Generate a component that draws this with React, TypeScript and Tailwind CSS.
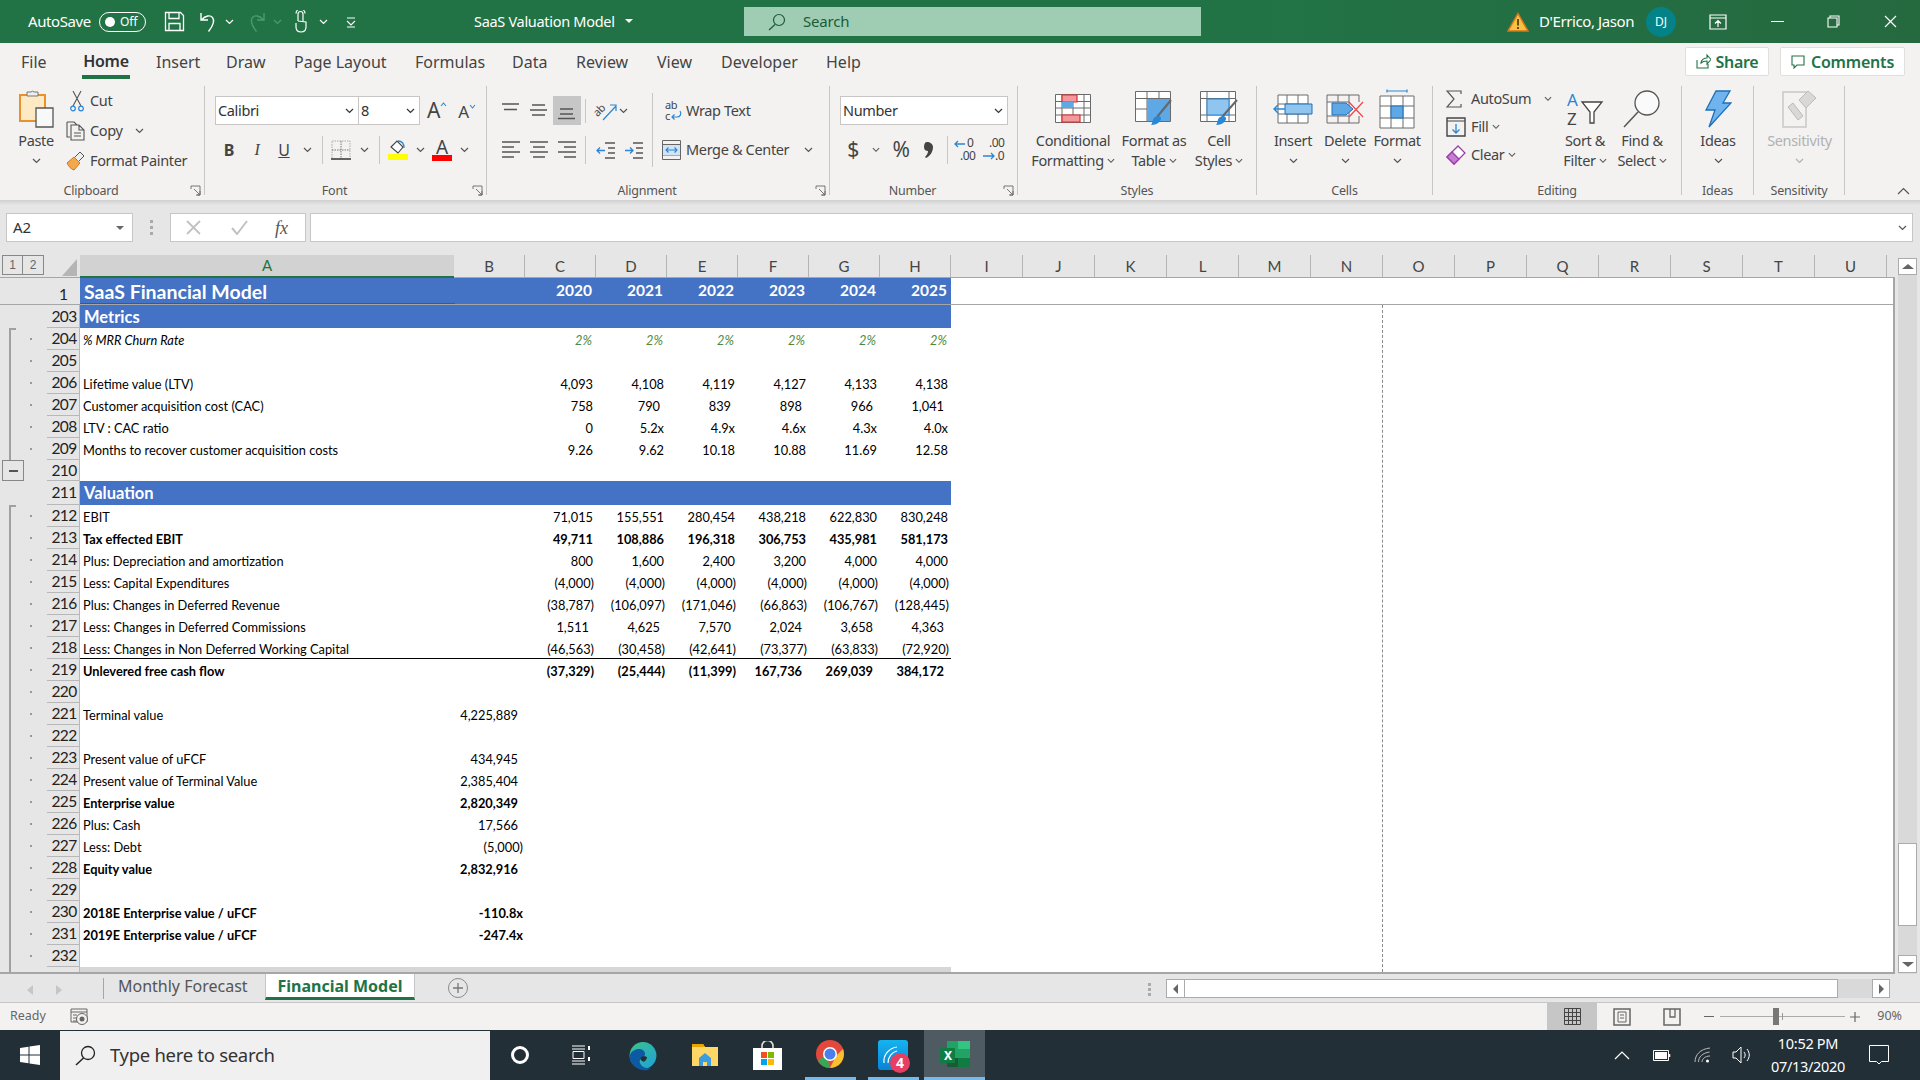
import React from 'react';

const UI = "font-['Noto_Sans',sans-serif]";
const CELL = "font-['Lato',sans-serif]";

type S = { w: number; h: number; v?: string; children?: React.ReactNode; c?: string };
const Svg = ({ w, h, v, children, c }: S) => (
  <svg width={w} height={h} viewBox={v ?? `0 0 ${w} ${h}`} fill="none" className={c ?? 'block shrink-0'}>{children}</svg>
);

const Chev = ({ color = '#555', w = 9 }: { color?: string; w?: number }) => (
  <Svg w={w} h={6} v="0 0 9 6"><path d="M1 1l3.5 3.5L8 1" stroke={color} strokeWidth="1.2" /></Svg>
);

const G = '#555';
const B = '#2b86d4';

/* ---------- title bar ---------- */
const TitleBar = () => (
  <div className="h-[43px] shrink-0 flex items-center bg-linear-to-r from-[#217346] from-65% to-[#25693f] text-white">
    <div className="ml-[28px] w-[71px] text-[15px] tracking-[-0.4px]">AutoSave</div>
    <div className="w-[47px] h-[20px] border border-white rounded-full flex items-center pl-[5px] gap-[5px]">
      <div className="w-[10px] h-[10px] rounded-full bg-white" />
      <span className="text-[12px] leading-none">Off</span>
    </div>
    <div className="ml-[18px]">
      <Svg w={21} h={21}><path d="M1.5 1.5h15l3 3v15h-18zM5 1.5v6h10v-6M5 19.5v-7h11v7" stroke="#fff" strokeWidth="1.3" /></Svg>
    </div>
    <div className="ml-[14px]">
      <Svg w={19} h={24}><path d="M2 3v7h7M2.5 10c4-5 9-5 11-2.500s1.500 7-4 14" stroke="#fff" strokeWidth="1.4" /></Svg>
    </div>
    <div className="ml-[7px]"><Chev color="#fff" /></div>
    <div className="ml-[13px]">
      <Svg w={20} h={24}><path d="M17 3v7h-7M16.500 10c-4-5-9-5-11-2.500s-1.500 7 4 14" stroke="#4d9a6e" strokeWidth="1.4" /></Svg>
    </div>
    <div className="ml-[6px]"><Chev color="#4d9a6e" /></div>
    <div className="ml-[11px]">
      <Svg w={15} h={24}><path d="M5 11V4a2.500 2.500 0 015 0v7M3 3.500a4.500 4.500 0 019 0M3 13v4c0 3 2 5 5 5s5-2 5-5v-5l-8-1" stroke="#fff" strokeWidth="1.2" /></Svg>
    </div>
    <div className="ml-[11px]"><Chev color="#fff" /></div>
    <div className="ml-[18px]">
      <Svg w={10} h={12}><path d="M1 2h8M1 5l4 4 4-4M1 11h8" stroke="#fff" strokeWidth="1.1" /></Svg>
    </div>
    <div className="ml-[118px] w-[270px] flex items-center text-[14.500px] tracking-[-0.3px]">
      <span>SaaS Valuation Model</span>
      <span className="ml-[10px] mb-[1px] w-0 h-0 border-x-[4px] border-x-transparent border-t-[4px] border-t-white" />
    </div>
    <div className="w-[457px] h-[29px] bg-[#9fcdb3] flex items-center text-[#1a5c38]">
      <div className="ml-[24px]">
        <Svg w={18} h={18}><circle cx="11" cy="7" r="5.500" stroke="#1a5c38" strokeWidth="1.200" /><path d="M7 11.500L1 17" stroke="#1a5c38" strokeWidth="1.200" /></Svg>
      </div>
      <span className="ml-[17px] text-[15px] tracking-[-0.2px]">Search</span>
    </div>
    <div className="ml-[306px]">
      <Svg w={22} h={20}><path d="M11 1.500L21 19H1z" fill="#f5c242" stroke="#d9731c" strokeWidth="1.500" /><path d="M11 7v6.500M11 15v2" stroke="#4a3000" strokeWidth="1.600" /></Svg>
    </div>
    <div className="ml-[10px] w-[108px] text-[15px] tracking-[-0.4px] whitespace-nowrap">D'Errico, Jason</div>
    <div className="w-[30px] h-[30px] -ml-[1px] rounded-full bg-[#038387] flex items-center justify-center text-[12px]">DJ</div>
    <div className="ml-[33px]">
      <Svg w={18} h={16}><path d="M1 1h16v14H1zM1 4h16M9 13V7M6 9.500l3-3 3 3" stroke="#fff" strokeWidth="1.200" /></Svg>
    </div>
    <div className="ml-[44px]"><div className="w-[13px] h-[1.500px] bg-white" /></div>
    <div className="ml-[43px]">
      <Svg w={13} h={13}><path d="M3 3V1h9v9h-2M1 3h9v9H1z" stroke="#fff" strokeWidth="1.100" /></Svg>
    </div>
    <div className="ml-[44px]">
      <Svg w={13} h={13}><path d="M1 1l11 11M12 1L1 12" stroke="#fff" strokeWidth="1.200" /></Svg>
    </div>
  </div>
);

/* ---------- ribbon tabs ---------- */
const TabsRow = () => (
  <div className={`h-[37px] shrink-0 flex items-center bg-[#f3f2f1] text-[#444] text-[16px] ${UI}`}>
    <div className="ml-[21px] w-[61px]">File</div>
    <div className="w-[74px] h-full flex items-start">
      <div className="w-[48px] h-[36px] border-b-[4px] border-[#217346] flex items-center justify-center font-semibold text-[#333] tracking-[-0.3px] pt-[4px]">Home</div>
    </div>
    <div className="w-[70px]">Insert</div>
    <div className="w-[68px]">Draw</div>
    <div className="w-[121px]">Page Layout</div>
    <div className="w-[97px]">Formulas</div>
    <div className="w-[64px]">Data</div>
    <div className="w-[81px]">Review</div>
    <div className="w-[64px]">View</div>
    <div className="w-[105px]">Developer</div>
    <div className="w-[60px]">Help</div>
    <div className="ml-auto w-[84px] h-[29px] bg-white border border-[#e1dfdd] rounded-[2px] flex items-center justify-center gap-[5px] font-semibold text-[#217346] tracking-[-0.3px]">
      <Svg w={15} h={15}><path d="M1 6v8h11v-4M5 9c0-3 3-5 6-5V1l4 4.500L11 10V7C8 7 6 8 5 9z" stroke="#217346" strokeWidth="1.100" /></Svg>
      Share
    </div>
    <div className="ml-[11px] mr-[15px] w-[125px] h-[29px] bg-white border border-[#e1dfdd] rounded-[2px] flex items-center justify-center gap-[6px] font-semibold text-[#217346] tracking-[-0.2px]">
      <Svg w={14} h={14}><path d="M1 1h12v9H6l-3 3v-3H1z" stroke="#217346" strokeWidth="1.100" /></Svg>
      Comments
    </div>
  </div>
);

/* ---------- ribbon parts ---------- */
const Launcher = () => (
  <div className="absolute right-[3px] top-[2px]">
    <Svg w={11} h={11}><path d="M1 4V1h9v9H7M4 4l6 6M10 6v4H6" stroke="#666" strokeWidth="0.900" /></Svg>
  </div>
);

const Group = ({ className, label, launcher, children }: { className: string; label: string; launcher?: boolean; children: React.ReactNode }) => (
  <div className={`${className} h-[109px] shrink-0 border-r border-[#c8c6c4] flex flex-col`}>
    <div className="h-[96px] shrink-0 flex">{children}</div>
    <div className={`relative h-[16px] mt-[1px] shrink-0 flex items-center justify-center text-[12.500px] leading-none text-[#555] tracking-[-0.2px] ${launcher ? 'pr-[22px]' : ''}`}>
      {label}
      {launcher && <Launcher />}
    </div>
  </div>
);

const Big = ({ className, icon, l1, l2, muted }: { className: string; icon: React.ReactNode; l1: string; l2?: string; muted?: boolean }) => (
  <div className={`${className} flex flex-col items-center shrink-0 ${muted ? 'text-[#b1b1b1]' : 'text-[#444]'}`}>
    <div className="h-[45px] flex items-center justify-center">{icon}</div>
    <div className="h-[20px] flex items-center whitespace-nowrap">{l1}</div>
    {l2 ? (
      <div className="h-[20px] flex items-center gap-[3px] whitespace-nowrap">{l2}<Chev w={8} /></div>
    ) : (
      <div className="h-[20px] flex items-center"><Chev color={muted ? '#b1b1b1' : '#555'} /></div>
    )}
  </div>
);

const Lines = ({ kind }: { kind: 'top' | 'mid' | 'bot' | 'left' | 'center' | 'right' }) => {
  const d: Record<string, string> = {
    top: 'M1 3h17M3 8.500h13', mid: 'M3 4h13M1 9h17M3 14h13', bot: 'M3 8h13M3 13h13M1 17.500h17',
    left: 'M1 2h18M1 7h12M1 12h18M1 17h12', center: 'M1 2h18M4 7h12M1 12h18M4 17h12', right: 'M1 2h18M7 7h12M1 12h18M7 17h12',
  };
  return <Svg w={20} h={19}><path d={d[kind]} stroke={G} strokeWidth="1.300" /></Svg>;
};

const Sep = ({ className }: { className: string }) => <div className={`${className} w-px bg-[#c8c6c4] shrink-0`} />;

const Combo = ({ className, text }: { className: string; text: string }) => (
  <div className={`${className} h-[29px] bg-white border border-[#c8c6c4] flex items-center justify-between pl-[2px] pr-[4px] text-[#333] text-[14.500px] shrink-0`}>
    <span>{text}</span><Chev color="#333" />
  </div>
);

const OV = 'block shrink-0 overflow-visible';

const Ribbon = () => (
  <div className={`h-[120px] shrink-0 bg-[#f3f2f1] flex pt-[6px] text-[14.500px] tracking-[-0.35px] text-[#444] ${UI}`}>
    {/* Clipboard */}
    <Group className="w-[205px]" label="Clipboard" launcher>
      <div className="ml-[14px] w-[44px] flex flex-col items-center">
        <div className="h-[45px] flex items-center justify-center">
          <Svg w={35} h={40}>
            <path d="M1 6h25v26H1z" fill="#fdeac4" stroke="#e8912d" strokeWidth="2" />
            <path d="M8 7V3h4a2 2 0 013 0h4v4z" fill="#eee" stroke="#777" />
            <path d="M17 19h17v19H17z" fill="#f8f8f8" stroke="#555" strokeWidth="1.300" />
          </Svg>
        </div>
        <div className="h-[20px] flex items-center">Paste</div>
        <div className="h-[20px] flex items-center"><Chev /></div>
      </div>
      <div className="ml-[8px] flex flex-col">
        <div className="h-[30px] flex items-center">
          <div className="w-[16px] ml-[4px] mr-[4px]">
            <Svg w={14} h={22}>
              <path d="M3 16L11 1M11 16L3 1" stroke="#555" strokeWidth="1.100" />
              <circle cx="3" cy="18.500" r="2.300" stroke={B} strokeWidth="1.200" /><circle cx="11" cy="18.500" r="2.300" stroke={B} strokeWidth="1.200" />
            </Svg>
          </div>
          Cut
        </div>
        <div className="h-[30px] flex items-center">
          <div className="w-[20px] mr-[4px]">
            <Svg w={20} h={20}><path d="M1 1h7l3 3M1 1v15h3M5 4h8l5 5v10H5zM13 4v5h5M8 12h7M8 15h7" stroke="#555" strokeWidth="1.100" /></Svg>
          </div>
          Copy
          <div className="ml-[12px]"><Chev /></div>
        </div>
        <div className="h-[30px] flex items-center">
          <div className="w-[20px] mr-[4px]">
            <Svg w={20} h={20}><path d="M1 12l7-6 6 6-6 7C5 18 3 16 1 12z" fill="#f2a84b" stroke="#d9731c" /><path d="M9 6l5-5 4 4-5 5" fill="#eee" stroke="#555" /></Svg>
          </div>
          Format Painter
        </div>
      </div>
    </Group>
    {/* Font */}
    <Group className="w-[282px]" label="Font" launcher>
      <div className="ml-[10px] pt-[10px] flex flex-col">
        <div className="flex items-center h-[29px]">
          <Combo className="w-[144px]" text="Calibri" />
          <Combo className="w-[62px] -ml-px" text="8" />
          <div className="w-[26px] ml-[4px] flex items-start justify-center text-[#444] text-[21px] leading-none">A<Svg w={7} h={5} c="mt-[2px]"><path d="M1 4l2.500-3L6 4" stroke={B} strokeWidth="1.100" /></Svg></div>
          <div className="w-[26px] ml-[4px] flex items-start justify-center text-[#444] text-[17px] leading-none mt-[2px]">A<Svg w={7} h={5} c="mt-[1px]"><path d="M1 1l2.500 3L6 1" stroke={B} strokeWidth="1.100" /></Svg></div>
        </div>
        <div className="flex items-center h-[29px] mt-[10px]">
          <div className="w-[28px] text-center font-bold text-[16px] text-[#444]">B</div>
          <div className="w-[28px] text-center italic text-[16px] text-[#444] font-['Liberation_Serif',serif]">I</div>
          <div className="w-[26px] text-center underline text-[16px] text-[#444]">U</div>
          <div className="w-[20px] flex justify-center"><Chev /></div>
          <Sep className="ml-[5px] h-[28px]" />
          <div className="ml-[8px] w-[20px]">
            <Svg w={20} h={20}><path d="M1 1h18v18H1z" stroke="#aaa" strokeWidth="1" strokeDasharray="1.500 1" /><path d="M10 1v18M1 10h18" stroke="#777" strokeDasharray="1.500 1" /><path d="M0 19h20" stroke="#444" strokeWidth="1.600" /></Svg>
          </div>
          <div className="w-[26px] flex justify-center"><Chev /></div>
          <Sep className="ml-[2px] h-[28px]" />
          <div className="ml-[8px] w-[20px] flex flex-col items-center">
            <Svg w={20} h={16}><path d="M3 8l6-6 6 6-5 6z" fill="#fff" stroke="#444" strokeWidth="1.100" /><path d="M10 2c3 0 6 2 6 7" stroke={B} strokeWidth="1.300" /></Svg>
            <div className="w-[20px] h-[6px] bg-[#ffff00] -mt-px" />
          </div>
          <div className="w-[24px] flex justify-center"><Chev /></div>
          <div className="w-[20px] flex flex-col items-center">
            <div className="h-[16px] text-[19px] leading-[16px] text-[#444]">A</div>
            <div className="w-[20px] h-[6px] bg-[#ff0000]" />
          </div>
          <div className="w-[24px] flex justify-center"><Chev /></div>
        </div>
      </div>
    </Group>
    {/* Alignment */}
    <Group className="w-[343px]" label="Alignment" launcher>
      <div className="ml-[10px] pt-[10px] flex flex-col">
        <div className="flex items-center h-[29px]">
          <div className="w-[28px] flex justify-center"><Lines kind="top" /></div>
          <div className="w-[28px] flex justify-center"><Lines kind="mid" /></div>
          <div className="w-[28px] h-[29px] bg-[#c6c6c6] flex items-center justify-center"><Lines kind="bot" /></div>
          <Sep className="ml-[4px] h-[24px]" />
          <div className="ml-[8px] w-[24px]">
            <Svg w={24} h={24} c={OV}>
              <text x="0" y="14" fontSize="11" fill="#444" transform="rotate(-45 7 12)">ab</text>
              <path d="M9 21L22 7M16 6h6v6" stroke={B} strokeWidth="1.200" />
            </Svg>
          </div>
          <div className="w-[10px] flex justify-center"><Chev /></div>
        </div>
        <div className="flex items-center h-[29px] mt-[10px]">
          <div className="w-[28px] flex justify-center"><Lines kind="left" /></div>
          <div className="w-[28px] flex justify-center"><Lines kind="center" /></div>
          <div className="w-[28px] flex justify-center"><Lines kind="right" /></div>
          <Sep className="ml-[4px] h-[28px]" />
          <div className="ml-[6px] w-[28px] flex justify-center">
            <Svg w={20} h={18}><path d="M9 2h10M12 7h7M12 12h7M9 17h10" stroke={G} strokeWidth="1.300" /><path d="M9 9.500H1M4 6.500l-3 3 3 3" stroke={B} strokeWidth="1.300" /></Svg>
          </div>
          <div className="w-[27px] flex justify-center">
            <Svg w={20} h={18}><path d="M9 2h10M12 7h7M12 12h7M9 17h10" stroke={G} strokeWidth="1.300" /><path d="M1 9.500h8M6 6.500l3 3-3 3" stroke={B} strokeWidth="1.300" /></Svg>
          </div>
        </div>
      </div>
      <Sep className="ml-[5px] mt-[7px] h-[74px]" />
      <div className="ml-[9px] pt-[10px] flex flex-col">
        <div className="h-[29px] flex items-center">
          <div className="ml-[3px] mr-[4px] w-[17px]">
            <Svg w={17} h={22} c={OV}>
              <text x="0" y="9" fontSize="11" fill="#444">ab</text>
              <text x="0" y="20" fontSize="11" fill="#444">c</text>
              <path d="M15 11c2 3 0 6-3 6H7M9.500 14.500L7 17l2.500 2.500" stroke={B} strokeWidth="1.200" />
            </Svg>
          </div>
          Wrap Text
        </div>
        <div className="h-[29px] mt-[10px] flex items-center">
          <div className="mr-[5px] w-[19px]">
            <Svg w={19} h={20}><path d="M.5.500h18v19H.500z" stroke="#666" /><path d="M.5 4.500h18M.5 15h18" stroke="#666" /><path d="M1 5h17v10H1z" fill="#cfe4f7" /><path d="M4 10h11M6.500 7.500L4 10l2.500 2.500M12.500 7.500L15 10l-2.500 2.500" stroke={B} strokeWidth="1.100" /></Svg>
          </div>
          Merge &amp; Center
          <div className="ml-[15px]"><Chev /></div>
        </div>
      </div>
    </Group>
    {/* Number */}
    <Group className="w-[188px]" label="Number" launcher>
      <div className="ml-[10px] pt-[10px] flex flex-col">
        <Combo className="w-[168px]" text="Number" />
        <div className="flex items-center h-[29px] mt-[10px]">
          <div className="w-[26px] text-center text-[21px] leading-none">$</div>
          <div className="ml-[5px] w-[10px] flex justify-center"><Chev w={8} /></div>
          <div className="ml-[7px] w-[26px] text-center text-[21px] leading-none">%</div>
          <div className="ml-[2px] w-[26px] flex justify-center">
            <Svg w={10} h={16}><path d="M3 0c3 0 6 2 6 5 0 5-3 9-7 11l-1-1c2-2 3-4 3-6-2 0-4-1-4-4 0-3 1-5 3-5z" fill="#444" /></Svg>
          </div>
          <Sep className="ml-[5px] h-[28px]" />
          <div className="ml-[4px] w-[28px] flex justify-center">
            <Svg w={24} h={26} c={OV}>
              <text x="13" y="10" fontSize="12" fill="#444" letterSpacing="-0.500">0</text>
              <text x="6" y="23" fontSize="12" fill="#444" letterSpacing="-0.500">.00</text>
              <path d="M11 7H1M4 4L1 7l3 3" stroke={B} strokeWidth="1.300" />
            </Svg>
          </div>
          <div className="w-[28px] flex justify-center">
            <Svg w={24} h={26} c={OV}>
              <text x="7" y="10" fontSize="12" fill="#444" letterSpacing="-0.500">.00</text>
              <text x="13" y="23" fontSize="12" fill="#444" letterSpacing="-0.500">.0</text>
              <path d="M1 19h11M9 16l3 3-3 3" stroke={B} strokeWidth="1.300" />
            </Svg>
          </div>
        </div>
      </div>
    </Group>
    {/* Styles */}
    <Group className="w-[239px]" label="Styles">
      <Big className="ml-[6px] w-[98px]" l1="Conditional" l2="Formatting" icon={
        <Svg w={36} h={29}>
          <path d="M.5.500h35v28H.500zM.5 7.500h35M.5 14h35M.5 21h35M7 .500v28M18 .500v28M29 .500v28" stroke="#6a6a6a" fill="#fff" />
          <path d="M7 1h15v7H7z" fill="#f5989d" stroke="#d9312b" strokeWidth="1.200" />
          <path d="M7 8h11v6H7z" fill="#5ea8e6" />
          <path d="M7 21h18v7H7z" fill="#f5989d" stroke="#d9312b" strokeWidth="1.200" />
        </Svg>
      } />
      <Big className="w-[64px]" l1="Format as" l2="Table" icon={
        <Svg w={38} h={36}>
          <path d="M.5.500h35v30H.500zM.5 7.500h35M.5 18h35M12 .500v30M24 .500v30" stroke="#6a6a6a" fill="#fff" />
          <path d="M12 8h23v22H12z" fill="#5ea8e6" />
          <path d="M36 9L22 26" stroke="#666" strokeWidth="2" />
          <path d="M23 25c3 0 4 3 2 5-2 3-6 4-9 4 2-2 1-6 4-8z" fill="#2b86d4" />
        </Svg>
      } />
      <Big className="w-[66px]" l1="Cell" l2="Styles" icon={
        <Svg w={38} h={36}>
          <path d="M.5.500h35v30H.500zM.5 7.500h35M.5 24h35M7 .500v30M29 .500v30" stroke="#6a6a6a" fill="#fff" />
          <path d="M7 8h22v16H7z" fill="#90c5f0" stroke="#2b86d4" />
          <path d="M37 9L22 26" stroke="#666" strokeWidth="2" />
          <path d="M23 25c3 0 4 3 2 5-2 3-6 4-9 4 2-2 1-6 4-8z" fill="#2b86d4" />
        </Svg>
      } />
    </Group>
    {/* Cells */}
    <Group className="w-[176px]" label="Cells">
      <Big className="ml-[10px] w-[52px]" l1="Insert" icon={
        <Svg w={40} h={30}>
          <path d="M5 1h30v28H5zM14 1v28M25 1v28M5 10h30M5 20h30" stroke="#6a6a6a" fill="#fff" />
          <path d="M12 10h27v10H12z" fill="#90c5f0" stroke="#1e70b8" />
          <path d="M12 15H1M5 11l-4 4 4 4" stroke="#2b86d4" strokeWidth="1.500" />
        </Svg>
      } />
      <Big className="w-[52px]" l1="Delete" icon={
        <Svg w={38} h={30}>
          <path d="M1 1h32v7M1 1v7M1 22v7h32v-7M12 1v7M12 22v7M23 1v7M23 22v7" stroke="#6a6a6a" />
          <path d="M1 8h22v14H1z" fill="#fff" stroke="#6a6a6a" />
          <path d="M6 9h14l7 6-7 6H6z" fill="#5ea8e6" stroke="#1e70b8" />
          <path d="M23 8l14 15M37 8L23 23" stroke="#f0484b" strokeWidth="1.300" />
        </Svg>
      } />
      <Big className="w-[52px]" l1="Format" icon={
        <Svg w={36} h={40}>
          <path d="M8 2h20M8 .500v3M28 .500v3" stroke="#2b86d4" strokeWidth="1.200" />
          <path d="M1 7h34v32H1zM1 17h34M1 29h34M12 7v32M24 7v32" stroke="#6a6a6a" fill="#fff" />
          <path d="M12 17h12v12H12z" fill="#5ea8e6" stroke="#1e70b8" />
        </Svg>
      } />
    </Group>
    {/* Editing */}
    <Group className="w-[249px]" label="Editing">
      <div className="ml-[13px] w-[110px] flex flex-col -mt-[1px]">
        <div className="h-[28px] flex items-center">
          <div className="w-[25px]"><Svg w={17} h={18}><path d="M15 4V1H1l7 8-7 8h14v-3" stroke="#555" strokeWidth="1.200" /></Svg></div>
          AutoSum
          <div className="ml-[13px]"><Chev w={8} /></div>
        </div>
        <div className="h-[28px] flex items-center">
          <div className="w-[25px]"><Svg w={20} h={20}><path d="M1 1h18v18H1z" stroke="#444" strokeWidth="1.400" /><path d="M1 4h18" stroke="#444" /><path d="M10 7v9M6.500 12.500L10 16l3.500-3.500" stroke={B} strokeWidth="1.300" /></Svg></div>
          Fill
          <div className="ml-[4px]"><Chev w={8} /></div>
        </div>
        <div className="h-[28px] flex items-center">
          <div className="w-[25px]"><Svg w={20} h={20}><path d="M1 12L12 1l7 7-11 11z" fill="#fff" stroke="#9b3fa8" strokeWidth="1.300" /><path d="M1 12l5-5 7 7-5 5z" fill="#c57fd0" stroke="#9b3fa8" strokeWidth="1.300" /></Svg></div>
          Clear
          <div className="ml-[4px]"><Chev w={8} /></div>
        </div>
      </div>
      <Big className="w-[58px]" l1="Sort &" l2="Filter" icon={
        <Svg w={38} h={36} c={OV}>
          <text x="1" y="15" fontSize="17" fill="#2b86d4">A</text>
          <text x="1" y="34" fontSize="17" fill="#444">Z</text>
          <path d="M16 11h20l-8 10v11h-4V21z" stroke="#444" strokeWidth="1.300" fill="#fff" />
        </Svg>
      } />
      <Big className="w-[56px]" l1="Find &" l2="Select" icon={
        <Svg w={38} h={38}>
          <circle cx="24" cy="13" r="12" fill="#fafafa" stroke="#555" strokeWidth="1.300" />
          <path d="M15 22L1 37" stroke="#555" strokeWidth="1.500" />
        </Svg>
      } />
    </Group>
    {/* Ideas */}
    <Group className="w-[72px]" label="Ideas">
      <Big className="w-[72px]" l1="Ideas" icon={
        <Svg w={28} h={38}><path d="M12 1h14l-7 12h8L5 37l6-17H2z" fill="#6fb4ee" stroke="#1e70b8" strokeWidth="1.300" /></Svg>
      } />
    </Group>
    {/* Sensitivity */}
    <Group className="w-[91px]" label="Sensitivity">
      <Big className="w-[91px]" muted l1="Sensitivity" icon={
        <Svg w={35} h={38}>
          <path d="M1 2h23v35H1z" stroke="#c8c8c8" strokeWidth="1.500" />
          <path d="M6 17l10 13 5-4-10-13z" fill="#d8d8d8" stroke="#bbb" />
          <path d="M17 10l9-9 8 7-10 10z" fill="#d8d8d8" stroke="#bbb" />
        </Svg>
      } />
    </Group>
    <div className="flex-1 flex items-end justify-end pr-[10px] pb-[5px]">
      <Svg w={13} h={8}><path d="M1 7l5.500-5.500L12 7" stroke="#555" strokeWidth="1.200" /></Svg>
    </div>
  </div>
);

/* ---------- formula bar ---------- */
const FormulaBar = () => (
  <div className={`h-[50px] shrink-0 bg-[#e6e6e6] flex pt-[8px] ${UI}`}>
    <div className="ml-[6px] w-[127px] h-[29px] bg-white border border-[#c6c6c6] flex items-center justify-between pl-[6px] pr-[8px] text-[15px] text-[#333]">
      A2
      <span className="w-0 h-0 border-x-[4px] border-x-transparent border-t-[4px] border-t-[#666]" />
    </div>
    <div className="w-[37px] h-[29px] flex flex-col items-center justify-center gap-[3px]">
      <div className="w-[3px] h-[3px] bg-[#aaa]" /><div className="w-[3px] h-[3px] bg-[#aaa]" /><div className="w-[3px] h-[3px] bg-[#aaa]" />
    </div>
    <div className="w-[136px] h-[29px] bg-white border border-[#c6c6c6] flex items-center text-[#666]">
      <div className="ml-[15px]"><Svg w={15} h={15}><path d="M1 1l13 13M14 1L1 14" stroke="#c2c2c2" strokeWidth="1.800" /></Svg></div>
      <div className="ml-[30px]"><Svg w={17} h={15}><path d="M1 8l5 6L16 1" stroke="#c2c2c2" strokeWidth="2" /></Svg></div>
      <div className="ml-[27px] text-[18px] leading-none italic font-['Liberation_Serif',serif] text-[#555]">fx</div>
    </div>
    <div className="ml-[4px] w-[1603px] h-[29px] bg-white border border-[#c6c6c6] flex items-center justify-end pr-[5px]">
      <Chev color="#555" />
    </div>
  </div>
);

/* ---------- sheet ---------- */
const others = ['I', 'J', 'K', 'L', 'M', 'N', 'O', 'P', 'Q', 'R', 'S', 'T', 'U'];

const ColHeaders = () => (
  <div className={`h-[23px] shrink-0 flex bg-[#e6e6e6] border-b border-[#a6a6a6] text-[15px] text-[#444] leading-none ${CELL}`}>
    <div className="w-[47px] flex items-start pl-[2px] shrink-0 font-['Liberation_Sans',sans-serif] text-[12px] text-[#666]">
      <div className="w-[21px] h-[20px] border border-[#888] flex items-center justify-center">1</div>
      <div className="w-[21px] h-[20px] border border-[#888] border-l-0 flex items-center justify-center">2</div>
    </div>
    <div className="w-[33px] flex items-end justify-end pr-[3px] pb-[1px] shrink-0">
      <Svg w={15} h={17}><path d="M15 0v17H0z" fill="#b5b5b5" /></Svg>
    </div>
    <div className="w-[374px] shrink-0 bg-[#d2d2d2] border-b-2 border-[#217346] -mb-px flex items-center justify-center text-[#217346]">A</div>
    {['B', 'C', 'D', 'E', 'F', 'G', 'H'].map((c) => (
      <div key={c} className="w-[71px] shrink-0 border-r border-[#b5b5b5] flex items-center justify-center">{c}</div>
    ))}
    {others.map((c) => (
      <div key={c} className="w-[72px] shrink-0 border-r border-[#b5b5b5] flex items-center justify-center">{c}</div>
    ))}
  </div>
);

type R = {
  n: number; h?: 'h21' | 'h22' | 'h23' | 'h24'; label?: string; v?: string[]; bold?: boolean; italic?: boolean;
  band?: boolean; gut?: 'none' | 'start' | 'line' | 'minus'; under?: boolean;
};

const Gutter = ({ kind, dot }: { kind: R['gut']; dot: boolean }) => {
  if (kind === 'minus') {
    return (
      <div className="w-[47px] h-full shrink-0 bg-[#e6e6e6] pl-[2px] flex items-center">
        <div className="w-[22px] h-[21px] border border-[#888] flex items-center justify-center"><div className="w-[9px] h-[2px] bg-[#555]" /></div>
      </div>
    );
  }
  return (
    <div className="w-[47px] h-full shrink-0 bg-[#e6e6e6] flex items-center">
      <div className="w-[9px] shrink-0" />
      {kind === 'start' && <div className="w-[7px] h-full border-l-2 border-t-2 border-[#a0a0a0] shrink-0" />}
      {kind === 'line' && <div className="w-[7px] h-full border-l-2 border-[#a0a0a0] shrink-0" />}
      {kind === 'none' && <div className="w-[7px] shrink-0" />}
      {dot && <div className="ml-[14px] w-[2px] h-[2px] bg-[#999]" />}
    </div>
  );
};

const padOf = (s: string) => {
  if (s.startsWith('~')) return 'pr-[7px]';
  if (s.startsWith('(') || s.startsWith('-')) return 'pr-[2px]';
  return 'pr-[3px]';
};

const RowNum = ({ n }: { n: number }) => (
  <div className="w-[33px] h-full shrink-0 bg-[#e6e6e6] border-b border-r border-[#b8b8b8] flex items-center justify-center pl-[2px] pt-[1px] text-[15.500px] tracking-[-0.6px] text-[#222]">{n}</div>
);

const Row = ({ r }: { r: R }) => {
  const hc = r.h === 'h21' ? 'h-[21px]' : r.h === 'h23' ? 'h-[23px]' : r.h === 'h24' ? 'h-[24px]' : 'h-[22px]';
  const vals = r.v ?? [];
  return (
    <div className={`${hc} shrink-0 flex bg-white text-[12.800px] leading-none text-black`}>
      <Gutter kind={r.gut ?? 'line'} dot={!r.band && r.gut !== 'minus' && r.gut !== 'none'} />
      <RowNum n={r.n} />
      <div className={`flex h-full ${r.band ? 'bg-[#4472c4] text-white font-bold' : ''} ${r.under ? 'border-b border-black' : ''} ${r.bold ? 'font-bold' : ''} ${r.italic ? 'italic' : ''}`}>
        <div className={`w-[374px] shrink-0 flex items-center whitespace-nowrap ${r.band ? 'pl-[4px] pt-[1px] text-[16.500px]' : 'pl-[3px] pt-[3px]'}`}>{r.label}</div>
        {Array.from({ length: 7 }).map((_, i) => {
          const s = vals[i] ?? '';
          return (
            <div key={i} className={`w-[71px] shrink-0 flex items-center justify-end whitespace-nowrap pt-[3px] ${padOf(s)}`}>
              {s.replace('~', '')}
            </div>
          );
        })}
      </div>
    </div>
  );
};

const rows: R[] = [
  { n: 205 },
  { n: 206, label: 'Lifetime value (LTV)', v: ['', '4,093', '4,108', '4,119', '4,127', '4,133', '4,138'] },
  { n: 207, label: 'Customer acquisition cost (CAC)', v: ['', '758', '~790', '~839', '~898', '~966', '~1,041'] },
  { n: 208, label: 'LTV : CAC ratio', v: ['', '0', '5.2x', '4.9x', '4.6x', '4.3x', '4.0x'] },
  { n: 209, label: 'Months to recover customer acquisition costs', v: ['', '9.26', '9.62', '10.18', '10.88', '11.69', '12.58'] },
  { n: 210, h: 'h21', gut: 'minus' },
  { n: 211, h: 'h24', label: 'Valuation', band: true, gut: 'none' },
  { n: 212, label: 'EBIT', gut: 'start', v: ['', '71,015', '155,551', '280,454', '438,218', '622,830', '830,248'] },
  { n: 213, label: 'Tax effected EBIT', bold: true, v: ['', '49,711', '108,886', '196,318', '306,753', '435,981', '581,173'] },
  { n: 214, label: 'Plus: Depreciation and amortization', v: ['', '800', '1,600', '2,400', '3,200', '4,000', '4,000'] },
  { n: 215, label: 'Less: Capital Expenditures', v: ['', '(4,000)', '(4,000)', '(4,000)', '(4,000)', '(4,000)', '(4,000)'] },
  { n: 216, label: 'Plus: Changes in Deferred Revenue', v: ['', '(38,787)', '(106,097)', '(171,046)', '(66,863)', '(106,767)', '(128,445)'] },
  { n: 217, label: 'Less: Changes in Deferred Commissions', v: ['', '~1,511', '~4,625', '~7,570', '~2,024', '~3,658', '~4,363'] },
  { n: 218, label: 'Less: Changes in Non Deferred Working Capital', under: true, v: ['', '(46,563)', '(30,458)', '(42,641)', '(73,377)', '(63,833)', '(72,920)'] },
  { n: 219, label: 'Unlevered free cash flow', bold: true, v: ['', '(37,329)', '(25,444)', '(11,399)', '~167,736', '~269,039', '~384,172'] },
  { n: 220 },
  { n: 221, label: 'Terminal value', v: ['~4,225,889'] },
  { n: 222 },
  { n: 223, label: 'Present value of uFCF', v: ['~434,945'] },
  { n: 224, label: 'Present value of Terminal Value', v: ['~2,385,404'] },
  { n: 225, label: 'Enterprise value', bold: true, v: ['~2,820,349'] },
  { n: 226, label: 'Plus: Cash', v: ['~17,566'] },
  { n: 227, label: 'Less: Debt', v: ['(5,000)'] },
  { n: 228, label: 'Equity value', bold: true, v: ['~2,832,916'] },
  { n: 229 },
  { n: 230, label: '2018E Enterprise value / uFCF', bold: true, v: ['-110.8x'] },
  { n: 231, label: '2019E Enterprise value / uFCF', bold: true, v: ['-247.4x'] },
  { n: 232 },
];

const Sheet = () => (
  <div className={`h-[719px] shrink-0 flex bg-[#e6e6e6] ${CELL}`}>
    <div className="w-[1895px] shrink-0 flex flex-col">
      <ColHeaders />
      <div className="relative flex-1 flex flex-col bg-white border-r-2 border-[#a6a6a6] border-b-2 border-b-[#a6a6a6] overflow-hidden">
        {/* page-break line floats over the cells */}
        <div className="absolute left-[1382px] top-[27px] bottom-0 border-l border-dashed border-[#8a8a8a]" />
        {/* frozen row 1 */}
        <div className="h-[27px] shrink-0 flex bg-white border-b border-[#a6a6a6] leading-none text-white">
          <Gutter kind="none" dot={false} />
          <div className="w-[33px] h-full shrink-0 bg-[#e6e6e6] flex items-end justify-center pb-[2px] text-[15.500px] text-[#222]">1</div>
          <div className="flex h-full bg-[#4472c4] font-bold">
            <div className="w-[375px] shrink-0 flex items-end pl-[4px] pb-[2px] text-[19.500px] border-b border-[#217346]">SaaS Financial Model</div>
            <div className="w-[70px] shrink-0" />
            {['2020', '2021', '2022', '2023', '2024', '2025'].map((y) => (
              <div key={y} className="w-[71px] shrink-0 flex items-start justify-end pt-[5px] pr-[4px] text-[15.500px]">{y}</div>
            ))}
          </div>
        </div>
        <Row r={{ n: 203, h: 'h23', label: 'Metrics', band: true, gut: 'none' }} />
        <div className="h-[22px] shrink-0 flex bg-white text-[12.800px] leading-none text-black">
          <Gutter kind="start" dot />
          <RowNum n={204} />
          <div className="w-[374px] shrink-0 flex items-center pl-[3px] pt-[3px] italic">% MRR Churn Rate</div>
          <div className="w-[71px] shrink-0" />
          {[0, 1, 2, 3, 4, 5].map((i) => (
            <div key={i} className="w-[71px] shrink-0 flex items-center justify-end pt-[3px] pr-[4px] italic text-[#4e8a3c]">2%</div>
          ))}
        </div>
        {rows.map((r) => (
          <Row key={r.n} r={r} />
        ))}
        {/* partly hidden last row */}
        <div className="flex-1 flex overflow-hidden leading-none">
          <Gutter kind="line" dot={false} />
          <div className="w-[33px] h-full shrink-0 bg-[#e6e6e6] border-r border-[#b8b8b8] flex justify-center pl-[2px] pt-[3px] text-[15.500px] tracking-[-0.6px] text-[#222]">233</div>
          <div className="w-[871px] h-full bg-[#d6d6d6]" />
        </div>
      </div>
    </div>
    <div className="ml-[3px] mt-[3px] w-[19px] h-[716px] mb-[1px] bg-[#d9d9d9] flex flex-col">
      <div className="h-[17px] bg-white border border-[#ababab] flex items-center justify-center">
        <span className="w-0 h-0 border-x-[6px] border-x-transparent border-b-[5px] border-b-[#666]" />
      </div>
      <div className="mt-[568px] h-[83px] bg-white border border-[#ababab]" />
      <div className="mt-[29px] h-[18px] bg-white border border-[#ababab] flex items-center justify-center">
        <span className="w-0 h-0 border-x-[6px] border-x-transparent border-t-[5px] border-t-[#666]" />
      </div>
    </div>
  </div>
);

/* ---------- sheet tabs ---------- */
const SheetTabs = () => (
  <div className={`h-[29px] shrink-0 bg-[#e6e6e6] border-b border-[#c6c6c6] flex items-start text-[16px] ${UI}`}>
    <div className="ml-[27px] mt-[11px] w-0 h-0 border-y-[5px] border-y-transparent border-r-[6px] border-r-[#c6c6c6]" />
    <div className="ml-[23px] mt-[11px] w-0 h-0 border-y-[5px] border-y-transparent border-l-[6px] border-l-[#c6c6c6]" />
    <div className="ml-[41px] mt-[4px] w-px h-[21px] bg-[#a6a6a6]" />
    <div className="ml-[14px] w-[147px] h-[23px] flex items-center text-[#555]">Monthly Forecast</div>
    <div className="w-[150px] h-[26px] bg-white border-x border-[#c6c6c6] border-b-[3px] border-b-[#217346] flex items-center justify-center font-bold text-[#217346]">Financial Model</div>
    <div className="ml-[33px] mt-[4px] w-[20px] h-[20px] rounded-full border border-[#8a8a8a] flex items-center justify-center">
      <Svg w={10} h={10}><path d="M5 0v10M0 5h10" stroke="#777" strokeWidth="1.300" /></Svg>
    </div>
    <div className="ml-[680px] mt-[9px] flex flex-col gap-[2px]">
      <div className="w-[3px] h-[3px] bg-[#aaa]" /><div className="w-[3px] h-[3px] bg-[#aaa]" /><div className="w-[3px] h-[3px] bg-[#aaa]" />
    </div>
    <div className="ml-[15px] mt-[5px] w-[724px] h-[19px] bg-[#d9d9d9] flex">
      <div className="w-[19px] h-full bg-white border border-[#ababab] flex items-center justify-center">
        <span className="w-0 h-0 border-y-[5px] border-y-transparent border-r-[5px] border-r-[#666]" />
      </div>
      <div className="w-[653px] h-full bg-white border-y border-r border-[#ababab]" />
      <div className="ml-[34px] w-[18px] h-full bg-white border border-[#ababab] flex items-center justify-center">
        <span className="w-0 h-0 border-y-[5px] border-y-transparent border-l-[5px] border-l-[#666]" />
      </div>
    </div>
  </div>
);

/* ---------- status bar ---------- */
const StatusBar = () => (
  <div className={`h-[27px] shrink-0 bg-[#f3f2f1] flex items-center text-[12.500px] text-[#666] ${UI}`}>
    <div className="ml-[10px] w-[60px]">Ready</div>
    <Svg w={19} h={18}>
      <path d="M1 1h16v13H1zM1 4h16" stroke="#666" />
      <path d="M3 7h4M3 10h4M3 13h4" stroke="#666" />
      <circle cx="12" cy="11" r="5.500" fill="#f3f2f1" stroke="#666" /><circle cx="12" cy="11" r="2.500" fill="#666" />
    </Svg>
    <div className="ml-auto w-[50px] h-full bg-[#c6c6c6] flex items-center justify-center">
      <Svg w={17} h={17}><path d="M.5.500h16v16H.500zM.5 4.500h16M.5 8.500h16M.5 12.500h16M4.500.500v16M8.500.500v16M12.500.500v16" stroke="#444" /></Svg>
    </div>
    <div className="w-[50px] flex justify-center">
      <Svg w={18} h={18}><path d="M1 1h16v16H1z" stroke="#666" strokeWidth="1.500" /><path d="M5 4h8v10H5zM7 7h4M7 10h4" stroke="#666" /></Svg>
    </div>
    <div className="w-[50px] flex justify-center">
      <Svg w={18} h={18}><path d="M1 1h16v16H1z" stroke="#666" strokeWidth="1.500" /><path d="M7 1v8h5V1" stroke="#666" strokeWidth="1.300" /></Svg>
    </div>
    <div className="ml-[7px] w-[10px] h-[1.500px] bg-[#666]" />
    <div className="ml-[6px] w-[125px] h-px bg-[#aaa] flex items-center">
      <div className="ml-[53px] w-[6px] h-[17px] bg-[#777] shrink-0" />
      <div className="ml-[3px] w-px h-[7px] bg-[#999] shrink-0" />
    </div>
    <div className="ml-[5px]"><Svg w={10} h={10}><path d="M5 0v10M0 5h10" stroke="#666" strokeWidth="1.200" /></Svg></div>
    <div className="ml-[17px] mr-[18px] w-[25px] text-right">90%</div>
  </div>
);

/* ---------- taskbar ---------- */
const TaskBar = () => (
  <div className={`h-[50px] shrink-0 bg-[#222f37] flex text-white ${UI}`}>
    <div className="w-[60px] flex items-center justify-center">
      <Svg w={20} h={20}><path d="M0 3l8.500-1.200V9.500H0zM9.500 1.600L20 0v9.500H9.500zM0 10.500h8.500v7.700L0 17zM9.500 10.500H20V20L9.500 18.400z" fill="#fff" /></Svg>
    </div>
    <div className="w-[430px] mt-px bg-[#f0f0f0] flex items-center text-[#333] text-[18.500px] tracking-[-0.3px]">
      <div className="ml-[15px]"><Svg w={21} h={21}><circle cx="13" cy="8" r="6.500" stroke="#222" strokeWidth="1.300" /><path d="M8.500 13L1 20" stroke="#222" strokeWidth="1.500" /></Svg></div>
      <span className="ml-[14px] mb-[2px]">Type here to search</span>
    </div>
    <div className="w-[60px] flex items-center justify-center">
      <div className="w-[18px] h-[18px] rounded-full border-[3px] border-white" />
    </div>
    <div className="w-[62px] flex items-center justify-center">
      <Svg w={20} h={20}><path d="M1 1h13M1 4h13M1 16h13M1 19h13" stroke="#fff" /><path d="M2 6.500h11v7H2z" stroke="#fff" /><path d="M18 1v7M18 12v7" stroke="#fff" strokeWidth="2" strokeDasharray="4 3" /></Svg>
    </div>
    <div className="w-[62px] flex items-center justify-center">
      <Svg w={30} h={31} v="0 0 28 30">
        <defs><linearGradient id="edgeG" x1="0" y1="0" x2="1" y2="1"><stop offset="0" stopColor="#3bc58a" /><stop offset="1" stopColor="#1f9fd8" /></linearGradient></defs>
        <circle cx="14" cy="15" r="13" fill="url(#edgeG)" />
        <path d="M1 16c1-5 6-8 11-7 4 1 5 5 3 7-3 2-6 4-3 8 2 3 6 4 10 3-4 3-8 3-12 1-6-3-9-7-9-12z" fill="#0c59a4" />
        <path d="M12 17c2-2 5-1 6 0-1 2-1 3-3 4-2 0-4-2-3-4z" fill="#222f37" />
      </Svg>
    </div>
    <div className="w-[62px] flex items-center justify-center">
      <Svg w={28} h={24}>
        <path d="M1 1h11l2 3h13v19H1z" fill="#ffd766" /><path d="M1 1h11l2 3H1z" fill="#e6a500" />
        <path d="M8 15l6-5 6 5v8h-4v-4h-4v4H8z" fill="#3b9de0" />
      </Svg>
    </div>
    <div className="w-[62px] flex items-center justify-center">
      <Svg w={29} h={29}>
        <path d="M9 8V5a5.500 5.500 0 0111 0v3" stroke="#ddd" strokeWidth="1.600" />
        <path d="M0 7h29v22H0z" fill="#fff" />
        <path d="M8 11h6v6H8z" fill="#f25022" /><path d="M15 11h6v6h-6z" fill="#7fba00" /><path d="M8 18h6v6H8z" fill="#00a4ef" /><path d="M15 18h6v6h-6z" fill="#ffb900" />
      </Svg>
    </div>
    <div className="w-[64px] flex flex-col items-center">
      <div className="flex-1 flex items-center justify-center">
        <Svg w={28} h={28}>
          <circle cx="14" cy="14" r="14" fill="#e2493c" />
          <path d="M14 28a14 14 0 01-12-7l8-7 4 14z" fill="#34a853" />
          <path d="M27 9a14 14 0 01-13 19l6-12z" fill="#fbc02d" />
          <circle cx="14" cy="14" r="7" fill="#fff" /><circle cx="14" cy="14" r="5.500" fill="#4a80ec" />
        </Svg>
      </div>
      <div className="w-[51px] h-[3px] bg-[#76b9ed]" />
    </div>
    <div className="w-[62px] flex flex-col items-center">
      <div className="flex-1 flex items-center justify-center pt-[3px]">
        <div className="relative w-[30px] h-[30px] rounded-[3px] bg-linear-to-b from-[#16b3ef] to-[#0a84d6]">
          <Svg w={24} h={24} c="block ml-[3px] mt-[3px]"><path d="M3 20C2 12 8 5 16 4M7 20c0-6 4-11 9-12M11 20c0-3 2-6 5-7" stroke="#fff" strokeWidth="1.200" /></Svg>
          <div className="absolute -right-[2px] -bottom-[3px] w-[20px] h-[20px] rounded-full bg-[#e83e63] flex items-center justify-center text-[14px] font-bold leading-none">4</div>
        </div>
      </div>
      <div className="w-[51px] h-[3px] bg-[#76b9ed]" />
    </div>
    <div className="w-[61px] bg-[#4f5b62] flex flex-col items-center">
      <div className="flex-1 flex items-center justify-center">
        <Svg w={30} h={28} c={OV}>
          <path d="M7 1h23v26H7z" fill="#21a366" /><path d="M18 1h12v8H18z" fill="#33c481" /><path d="M18 9h12v9H18z" fill="#21a366" /><path d="M7 18h23v9H7z" fill="#185c37" /><path d="M18 18h12v9H18z" fill="#107c41" />
          <path d="M0 8h15v15H0z" fill="#107c41" />
          <text x="4" y="20" fontSize="12" fontWeight="700" fill="#fff">X</text>
        </Svg>
      </div>
      <div className="w-full h-[3px] bg-[#76b9ed]" />
    </div>
    <div className="ml-auto w-[40px] flex items-center justify-center">
      <Svg w={16} h={10}><path d="M1 9l7-7 7 7" stroke="#fff" strokeWidth="1.200" /></Svg>
    </div>
    <div className="w-[40px] flex items-center justify-center">
      <Svg w={18} h={11}><path d="M.5.500h15v10H.500z" stroke="#fff" /><path d="M2 2h12v7H2z" fill="#fff" /><path d="M16.500 4v3" stroke="#fff" strokeWidth="1.500" /></Svg>
    </div>
    <div className="w-[40px] flex items-center justify-center">
      <Svg w={17} h={16}><path d="M1 15C1 8 6 2 16 1M4.500 15c0-5 4-9 11-10M8 15c0-3 3-6 8-6" stroke="#bbb" strokeWidth="1" /><circle cx="13.500" cy="14" r="1.500" fill="#fff" /></Svg>
    </div>
    <div className="w-[40px] flex items-center justify-center">
      <Svg w={20} h={20}><path d="M1 7h3l5-5v16l-5-5H1z" stroke="#fff" /><path d="M12 7c1.500 2 1.500 4 0 6M15 4c3 4 3 8 0 12" stroke="#fff" /></Svg>
    </div>
    <div className="w-[92px] flex flex-col items-center justify-center text-[14.500px] tracking-[-0.3px] leading-[23px]">
      <div>10:52 PM</div>
      <div>07/13/2020</div>
    </div>
    <div className="w-[50px] flex items-center justify-center">
      <Svg w={20} h={20}><path d="M.5.500h19v16h-7L10 19l-2.500-2.500h-7z" stroke="#fff" /></Svg>
    </div>
    <div className="w-[16px]" />
  </div>
);

export default function App() {
  return (
    <div className={`w-[1920px] h-[1080px] overflow-hidden flex flex-col bg-[#e6e6e6] ${UI}`}>
      <TitleBar />
      <TabsRow />
      <Ribbon />
      <div className="h-[5px] shrink-0 bg-linear-to-b from-[#cfcfcf] to-[#e6e6e6]" />
      <FormulaBar />
      <Sheet />
      <SheetTabs />
      <StatusBar />
      <TaskBar />
    </div>
  );
}
